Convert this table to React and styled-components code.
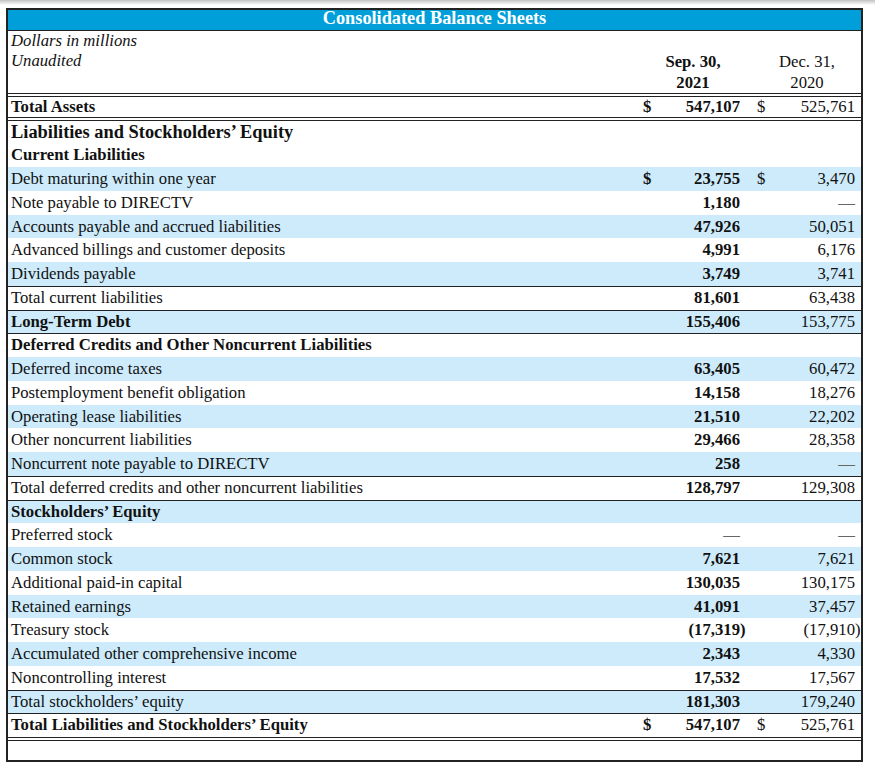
import React from "react";
import styled, { createGlobalStyle } from "styled-components";

const GlobalStyle = createGlobalStyle`
  html, body {
    margin: 0;
    background: linear-gradient(#c2c2c2 0px, #ffffff 5px) no-repeat top / 100% 5px, #ffffff;
  }
  body {
    font-family: "Liberation Serif", "Times New Roman", serif;
    color: #111;
  }
`;

const COLS = "630px 17px 93px 20px 1fr";

const rows = [
  { label: "Debt maturing within one year", a: "23,755", b: "3,470", dollar: true },
  { label: "Note payable to DIRECTV", a: "1,180", b: null },
  { label: "Accounts payable and accrued liabilities", a: "47,926", b: "50,051" },
  { label: "Advanced billings and customer deposits", a: "4,991", b: "6,176" },
  { label: "Dividends payable", a: "3,749", b: "3,741" },
  { label: "Total current liabilities", a: "81,601", b: "63,438", rule: true },
  { label: "Long-Term Debt", a: "155,406", b: "153,775", rule: true, strong: true },
  { label: "Deferred Credits and Other Noncurrent Liabilities", rule: true, strong: true, empty: true },
  { label: "Deferred income taxes", a: "63,405", b: "60,472" },
  { label: "Postemployment benefit obligation", a: "14,158", b: "18,276" },
  { label: "Operating lease liabilities", a: "21,510", b: "22,202" },
  { label: "Other noncurrent liabilities", a: "29,466", b: "28,358" },
  { label: "Noncurrent note payable to DIRECTV", a: "258", b: null },
  { label: "Total deferred credits and other noncurrent liabilities", a: "128,797", b: "129,308", rule: true },
  { label: "Stockholders’ Equity", rule: true, strong: true, empty: true },
  { label: "Preferred stock", a: null, b: null },
  { label: "Common stock", a: "7,621", b: "7,621" },
  { label: "Additional paid-in capital", a: "130,035", b: "130,175" },
  { label: "Retained earnings", a: "41,091", b: "37,457" },
  { label: "Treasury stock", a: "(17,319)", b: "(17,910)" },
  { label: "Accumulated other comprehensive income", a: "2,343", b: "4,330" },
  { label: "Noncontrolling interest", a: "17,532", b: "17,567" },
  { label: "Total stockholders’ equity", a: "181,303", b: "179,240", rule: true },
  { label: "Total Liabilities and Stockholders’ Equity", a: "547,107", b: "525,761", rule: true, strong: true, dollar: true },
];

const Page = styled.div`
  padding: 8px 0 0 6px;
`;

const Sheet = styled.div`
  width: 857px;
  box-sizing: border-box;
  border: 2px solid #222;
  background: #fff;
`;

const Title = styled.div`
  height: 16px;
  padding-bottom: 4px;
  background: #009fda;
  border-bottom: 1px solid #222;
  color: #fff;
  font-weight: bold;
  font-size: 18.3px;
  line-height: 16px;
  text-align: center;
`;

const HeadBlock = styled.div`
  display: grid;
  grid-template-columns: ${COLS};
  height: 62px;
  font-size: 16.7px;
`;

const Note = styled.div`
  padding-left: 3px;
  font-style: italic;
  line-height: 20px;
`;

const DateHead = styled.div`
  grid-column: span 2;
  align-self: end;
  text-align: center;
  line-height: 21px;
  font-weight: ${(p) => (p.$current ? "bold" : "normal")};
  padding-left: ${(p) => (p.$current ? "0" : "5px")};
`;

const DoubleRule = styled.div`
  height: 4px;
  box-sizing: border-box;
  border-top: 1px solid #222;
  border-bottom: 1px solid #222;
`;

const Row = styled.div`
  display: grid;
  grid-template-columns: ${COLS};
  box-sizing: border-box;
  height: ${(p) => p.$h || "23.75px"};
  line-height: ${(p) => (p.$rule ? "22.75px" : p.$h || "23.75px")};
  font-size: ${(p) => (p.$big ? "18.4px" : "16.7px")};
  background: ${(p) => (p.$shade ? "#cdebfb" : "#fff")};
  border-top: ${(p) => (p.$rule ? "1px solid #222" : "none")};
  white-space: nowrap;
`;

const Label = styled.div`
  padding-left: 3px;
  font-weight: ${(p) => (p.$strong ? "bold" : "normal")};
`;

const Dollar = styled.div`
  padding-left: ${(p) => (p.$current ? "5px" : "9px")};
  font-weight: ${(p) => (p.$current ? "bold" : "normal")};
`;

const Amount = styled.div`
  text-align: right;
  padding-right: ${(p) => (p.$current ? "8px" : "6px")};
  font-weight: ${(p) => (p.$current ? "bold" : "normal")};
`;

const Dash = styled.span`
  color: #666;
  font-weight: normal;
`;

const Hang = styled.span`
  margin-right: -0.333em;
`;

function Value({ v }) {
  if (v === null) return <Dash>—</Dash>;
  if (v.startsWith("(")) {
    return (
      <>
        {v.slice(0, -1)}
        <Hang>)</Hang>
      </>
    );
  }
  return v;
}

function DataRow({ row, shade, h }) {
  return (
    <Row $shade={shade} $rule={row.rule} $h={h}>
      <Label $strong={row.strong}>{row.label}</Label>
      <Dollar $current>{row.dollar ? "$" : ""}</Dollar>
      <Amount $current>{row.empty ? "" : <Value v={row.a} />}</Amount>
      <Dollar>{row.dollar ? "$" : ""}</Dollar>
      <Amount>{row.empty ? "" : <Value v={row.b} />}</Amount>
    </Row>
  );
}

export default function App() {
  return (
    <Page>
      <GlobalStyle />
      <Sheet>
        <Title>Consolidated Balance Sheets</Title>
        <HeadBlock>
          <Note>
            Dollars in millions
            <br />
            Unaudited
          </Note>
          <DateHead $current>
            Sep. 30,
            <br />
            2021
          </DateHead>
          <DateHead>
            Dec. 31,
            <br />
            2020
          </DateHead>
        </HeadBlock>
        <DoubleRule />
        <DataRow
          row={{ label: "Total Assets", a: "547,107", b: "525,761", strong: true, dollar: true }}
          shade={false}
          h="20px"
        />
        <DoubleRule />
        <Row $big $h="22.25px">
          <Label $strong>Liabilities and Stockholders’ Equity</Label>
        </Row>
        <Row>
          <Label $strong>Current Liabilities</Label>
        </Row>
        {rows.map((row, i) => (
          <DataRow key={row.label} row={row} shade={i % 2 === 0} />
        ))}
        <DoubleRule />
        <Row $h="19px" />
      </Sheet>
    </Page>
  );
}
